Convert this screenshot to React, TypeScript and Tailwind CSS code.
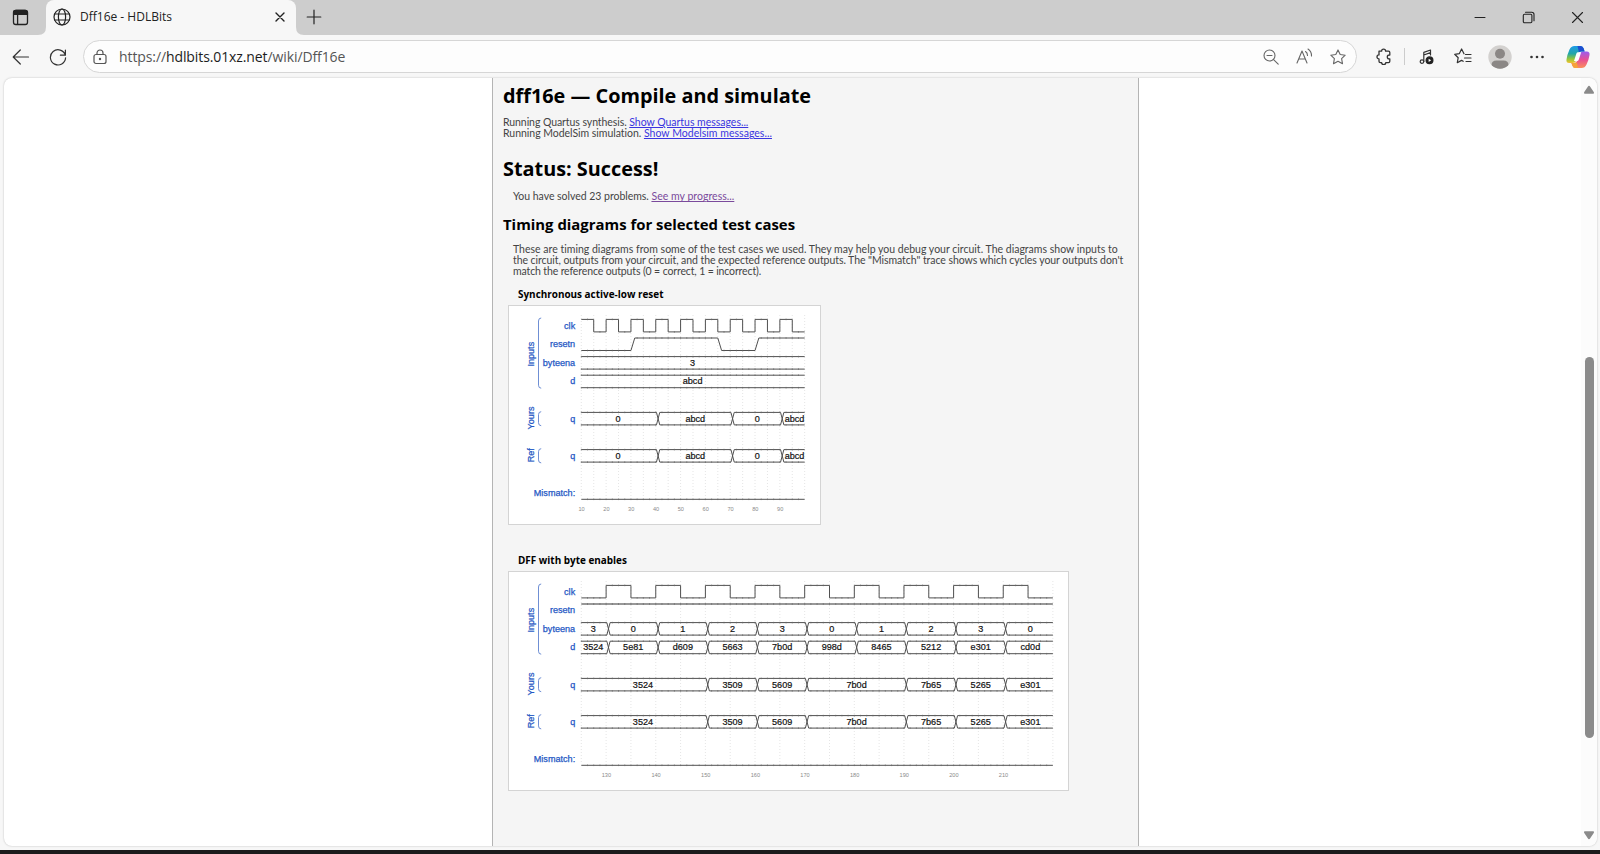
import React from "react";

type Segment = [number, number, string];
type Wave =
  | { kind: "level"; name: string; lane: number; points: [number, number][]; sharp?: boolean; heavy?: boolean }
  | { kind: "bus"; name: string; lane: number; segments: Segment[] };

const STEP = 12.41;
const LANE = 18.6;
const HIGH = 12.5;
const LEFT = 73.3;
const TOP = 14.4;

function levelPath(points: [number, number][], end: number, sharp?: boolean) {
  let d = "";
  points.forEach(([t, v], i) => {
    const x = LEFT + t * STEP;
    const y = v ? 0 : HIGH;
    if (i === 0) d += `M${x} ${y}`;
    else {
      const prev = points[i - 1][1] ? 0 : HIGH;
      d += `L${x} ${prev}L${sharp ? x : x + 3.8} ${y}`;
    }
  });
  const last = points[points.length - 1][1] ? 0 : HIGH;
  return d + `L${LEFT + end * STEP} ${last}`;
}

function busPath(segments: Segment[], end: number) {
  return segments
    .map(([s, e]) => {
      const x1 = LEFT + s * STEP;
      const x2 = LEFT + e * STEP;
      const a = s === 0 ? `M${x1} 0` : `M${x1 + 0.7} ${HIGH}L${x1 + 4} 0`;
      const b = s === 0 ? `M${x1} ${HIGH}` : `M${x1 + 0.7} 0L${x1 + 4} ${HIGH}`;
      const close = e === end ? 0 : 0.7;
      return `${a}L${x2 + close} 0${b}L${x2 + close} ${HIGH}`;
    })
    .join("");
}

function Diagram({
  width,
  end,
  grid,
  waves,
  labels,
}: {
  width: number;
  end: number;
  grid: number;
  waves: Wave[];
  labels: [number, string][];
}) {
  const gridLines = Array.from({ length: Math.floor(end / grid) + 1 }, (_, i) => LEFT + i * grid * STEP);
  const ticks = Array.from({ length: end * 2 }, (_, i) => LEFT + (i * STEP) / 2);
  const tickRow = (y: number) => ticks.map((x) => `M${x} ${y - 0.8}v1.6`).join("");
  const groups: [string, number, number, number][] = [
    ["Inputs", 13, 83.2, 49.2],
    ["Yours", 106.7, 120.7, 113],
    ["Ref", 143.7, 157.9, 150.2],
  ];
  return (
    <svg width={width} height="220" viewBox={`0 0 ${width} 220`} fontFamily="'Liberation Sans', Arial, sans-serif" fontSize="9.1" className="block">
      {gridLines.map((x) => (
        <path key={x} d={`M${x} 10V193`} stroke="#dedede" strokeWidth="0.8" strokeDasharray="1 2" />
      ))}
      {groups.map(([name, y1, y2, c]) => (
        <g key={name}>
          <path d={`M33.2 ${y1}q-2.7 0 -2.7 3V${y2 - 3}q0 3 2.7 3`} fill="none" stroke="#6f8fd4" />
          <text transform={`translate(26.4 ${c}) rotate(-90)`} textAnchor="middle" fill="#2457c4" stroke="#2457c4" strokeWidth="0.25">
            {name}
          </text>
        </g>
      ))}
      {waves.map((w) => (
        <g key={w.lane} transform={`translate(0 ${TOP + w.lane * LANE})`}>
          <text x="67.2" y="9.3" textAnchor="end" fill="#2457c4" stroke="#2457c4" strokeWidth="0.25">
            {w.name}
          </text>
          {w.kind === "level" ? (
            <>
              <path d={levelPath(w.points, end, w.sharp)} fill="none" stroke={w.heavy ? "#333" : "#505050"} strokeWidth={w.heavy ? 1.2 : 1} />
              {w.points.map(([t, v], i) => {
                const stop = w.points[i + 1]?.[0] ?? end;
                const y = v ? 0 : HIGH;
                return (
                  <path
                    key={t}
                    d={ticks
                      .filter((x) => x > LEFT + t * STEP + 1 && x < LEFT + stop * STEP)
                      .map((x) => `M${x} ${y - 0.8}v1.6`)
                      .join("")}
                    stroke="#666"
                    strokeWidth="0.7"
                  />
                );
              })}
            </>
          ) : (
            <>
              <path d={busPath(w.segments, end)} fill="none" stroke="#505050" />
              <path d={tickRow(0) + tickRow(HIGH)} stroke="#666" strokeWidth="0.7" />
              {w.segments.map(([s, e, v]) => (
                <text
                  key={s}
                  x={LEFT + ((s + e) / 2) * STEP + (s === 0 ? -0.4 : 2.3)}
                  y="9.3"
                  textAnchor="middle"
                  fill="#111"
                  stroke="#111"
                  strokeWidth="0.2"
                >
                  {v}
                </text>
              ))}
            </>
          )}
        </g>
      ))}
      {labels.map(([t, v]) => (
        <text key={v} x={LEFT + t * STEP + 0.3} y="206.4" textAnchor="middle" fontSize="5.6" fill="#8a8a8a">
          {v}
        </text>
      ))}
    </svg>
  );
}

const clock = (end: number, start: number, half: number, first: number): [number, number][] => {
  const out: [number, number][] = [[0, start]];
  let v = start;
  for (let t = first; t < end; t += half) {
    v = v ? 0 : 1;
    out.push([t, v]);
  }
  return out;
};

const resetQ: Segment[] = [[0, 6, "0"], [6, 12, "abcd"], [12, 16, "0"], [16, 18, "abcd"]];
const resetWaves: Wave[] = [
  { kind: "level", name: "clk", lane: 0, sharp: true, points: clock(18, 1, 1, 1) },
  { kind: "level", name: "resetn", lane: 1, points: [[0, 0], [4, 1], [11, 0], [14, 1]] },
  { kind: "bus", name: "byteena", lane: 2, segments: [[0, 18, "3"]] },
  { kind: "bus", name: "d", lane: 3, segments: [[0, 18, "abcd"]] },
  { kind: "bus", name: "q", lane: 5, segments: resetQ },
  { kind: "bus", name: "q", lane: 7, segments: resetQ },
  { kind: "level", name: "Mismatch:", lane: 9, points: [[0, 0]] },
];

const spread = (values: string[]): Segment[] =>
  values.map((v, i) => (i === 0 ? [0, 2, v] : [i * 4 - 2, Math.min(i * 4 + 2, 38), v]));
const byteQ: Segment[] = [
  [0, 10, "3524"],
  [10, 14, "3509"],
  [14, 18, "5609"],
  [18, 26, "7b0d"],
  [26, 30, "7b65"],
  [30, 34, "5265"],
  [34, 38, "e301"],
];
const byteWaves: Wave[] = [
  { kind: "level", name: "clk", lane: 0, sharp: true, points: clock(38, 0, 2, 2) },
  { kind: "level", name: "resetn", lane: 1, heavy: true, points: [[0, 1]] },
  { kind: "bus", name: "byteena", lane: 2, segments: spread(["3", "0", "1", "2", "3", "0", "1", "2", "3", "0"]) },
  { kind: "bus", name: "d", lane: 3, segments: spread(["3524", "5e81", "d609", "5663", "7b0d", "998d", "8465", "5212", "e301", "cd0d"]) },
  { kind: "bus", name: "q", lane: 5, segments: byteQ },
  { kind: "bus", name: "q", lane: 7, segments: byteQ },
  { kind: "level", name: "Mismatch:", lane: 9, points: [[0, 0]] },
];

function Icon({ size = 18, w = 1.2, className = "", children }: { size?: number; w?: number; className?: string; children: React.ReactNode }) {
  return (
    <svg width={size} height={size} viewBox={`0 0 ${size} ${size}`} fill="none" stroke="currentColor" strokeWidth={w} strokeLinecap="round" strokeLinejoin="round" className={`block shrink-0 ${className}`}>
      {children}
    </svg>
  );
}

const STAR = "M8 .9l2.2 4.6 5 .7-3.6 3.5.9 5L8 12.3l-4.5 2.4.9-5L.8 6.2l5-.7z";

function TabStrip() {
  return (
    <div className="flex h-[35px] shrink-0 items-center bg-[#cdcdcd] text-[#222]">
      <div className="flex h-full w-[46px] items-center pl-[12px]">
        <Icon size={17} w={1.3}>
          <rect x="1.5" y="1.5" width="14" height="14" rx="2.2" />
          <path d="M1.7 2.5Q2 1.3 4 1.3h9q2.2 0 2.4 2V5.4H1.7z" fill="currentColor" />
          <path d="M5.6 5v10.3" />
        </Icon>
      </div>
      <div className="relative flex h-full w-[250px] items-center rounded-t-lg bg-[#f7f7f7] pl-[7px]">
        <svg width="8" height="8" viewBox="0 0 8 8" className="absolute bottom-0 -left-2" fill="#f7f7f7">
          <path d="M8 0v8H0q8 0 8-8z" />
        </svg>
        <svg width="8" height="8" viewBox="0 0 8 8" className="absolute -right-2 bottom-0" fill="#f7f7f7">
          <path d="M0 0v8h8Q0 8 0 0z" />
        </svg>
        <Icon size={18} w={1.2} className="-mt-px">
          <circle cx="9" cy="9" r="8" />
          <ellipse cx="9" cy="9" rx="3.6" ry="8" />
          <path d="M1.7 6h14.6M1.7 12h14.6" />
        </Icon>
        <span className="-mt-px ml-[9px] w-[180px] whitespace-nowrap font-['Open_Sans',sans-serif] text-[12px] leading-[16px]">Dff16e - HDLBits</span>
        <Icon size={12} w={1.4} className="-mt-px ml-[14px]">
          <path d="M2 2l8 8M10 2l-8 8" />
        </Icon>
      </div>
      <Icon size={16} w={1.2} className="-mt-[2px] ml-[10px]">
        <path d="M8 1.2v13.6M1.2 8h13.6" />
      </Icon>
      <div className="ml-auto flex items-center gap-[36px] pr-[16px]">
        <Icon size={12} w={1}>
          <path d="M1 5.5h10" />
        </Icon>
        <Icon size={13} w={1.1}>
          <rect x="1.3" y="3.2" width="8.6" height="8.6" rx="1.2" />
          <path d="M3.5 1.2h6.2q2.3 0 2.3 2.3v6.2" />
        </Icon>
        <Icon size={13} w={1.1}>
          <path d="M1.500 1.500l10 10M11.500 1.500l-10 10" />
        </Icon>
      </div>
    </div>
  );
}

function Copilot() {
  return (
    <svg width="24" height="24" viewBox="0 0 24 24" className="ml-[21px] block shrink-0">
      <defs>
        <linearGradient id="cool" x1="0" y1="0" x2="0" y2="1">
          <stop offset="0" stopColor="#1f9be8" />
          <stop offset=".45" stopColor="#22a6a8" />
          <stop offset=".75" stopColor="#8fc63d" />
          <stop offset="1" stopColor="#f3c12f" />
        </linearGradient>
        <linearGradient id="warm" x1="0" y1="0" x2="0" y2="1">
          <stop offset="0" stopColor="#9a5cf0" />
          <stop offset=".5" stopColor="#e84f93" />
          <stop offset="1" stopColor="#fb8f5a" />
        </linearGradient>
      </defs>
      <path d="M8.500 1h6.300q2 0 2.900 2.500l.9 3h-3.400q-2 0-2.900 2.300l-2.200 6.600q-.8 2.600-3.300 2.600H3.200Q0 18 .5 14.500 1.200 9.500 3.500 4.500 5 1 8.500 1z" fill="url(#cool)" />
      <path d="M15.500 23H9.200q-2 0-2.900-2.500l-.9-2.500h2.900q2 0 2.900-2.300l2.200-6.600q.8-2.600 3.300-2.600h4.100q3.200 0 2.700 3.500-.7 5-3 9.500Q19 23 15.500 23z" fill="url(#warm)" />
      <path d="M11.500 1h3.300q2 0 2.900 2.500l.9 3h-3.400q-1.300 0-2.200 1z" fill="#1d4fd0" />
      <path d="M5.400 18h2.900q1.500 0 2.400-1L12 23H9.200q-2 0-2.900-2.500z" fill="#f6a23a" />
      <path d="M10.500 8.300q.4-1 1.500-1h3.200l-2.500 7.500q-.4 1.200-1.600 1.200H8z" fill="#fff" />
    </svg>
  );
}

function Toolbar() {
  return (
    <div className="flex h-[43px] shrink-0 items-center bg-[#f7f7f7] pr-[8px] pl-[12px] text-[#333]">
      <Icon size={18} w={1.2}>
        <path d="M1.200 9h15.300M8.300 2L1.200 9l7.100 7" />
      </Icon>
      <Icon size={18} w={1.2} className="ml-[19px]">
        <path d="M16.300 7.200A7.600 7.600 0 1 0 16.600 9.800M16.400 2v5.200h-5" />
      </Icon>
      <div className="ml-[16px] flex h-[33px] w-[1274px] items-center rounded-full border border-[#d6d6d6] bg-[#fdfdfd] pr-[10px] pl-[8px] text-[#555]">
        <Icon size={16} w={1.2}>
          <rect x="2" y="5.500" width="12" height="9" rx="2" />
          <path d="M5 5.500V4a3 3 0 0 1 6 0v1.500" />
          <circle cx="8" cy="10" r=".6" fill="currentColor" />
        </Icon>
        <span className="ml-[11px] whitespace-nowrap font-['Open_Sans',sans-serif] text-[14px] leading-[20px] tracking-[-0.1px] text-[#555]">
          https://<span className="text-[#1c1c1c]">hdlbits.01xz.net</span>/wiki/Dff16e
        </span>
        <div className="ml-auto flex items-center gap-[17px] text-[#666]">
          <Icon size={16} w={1.1}>
            <circle cx="6.500" cy="6.500" r="5.500" />
            <path d="M10.600 10.600l4.600 4.600M4 6.500h5" />
          </Icon>
          <Icon size={17} w={1.1}>
            <path d="M1 15L6 3l5 12M2.700 11h6.600M9.500 3.500q2 1.300 2 4M12 1q3.700 2.500 3.500 7" />
          </Icon>
          <Icon size={16} w={1.1}>
            <path d={STAR} />
          </Icon>
        </div>
      </div>
      <Icon size={17} w={1.3} className="ml-[18px]">
        <path d="M4 3.200h2.600a2 2 0 0 1 4 0H13.500q1.300 0 1.300 1.300V7h-.6a1.900 1.900 0 0 0 0 3.800h.6v2.500q0 1.300-1.300 1.300H10.800a2.100 2.100 0 0 1-4.200 0H5.300Q4 14.600 4 13.300V10.900a2 2 0 0 1 0-4z" />
      </Icon>
      <div className="ml-[12px] h-[17px] w-px bg-[#ccc]" />
      <Icon size={16} w={1.2} className="ml-[14px]">
        <path d="M4.800 12.500V3.400L11.500 1v5M4.800 6l6.700-2.400" />
        <circle cx="3" cy="12.600" r="1.800" />
        <circle cx="10.500" cy="11.300" r="3.400" fill="#222" stroke="#222" />
        <path d="M9.600 9.700v3.200l2.600-1.600z" fill="#fff" stroke="none" />
      </Icon>
      <Icon size={18} w={1.2} className="ml-[19px]">
        <path d="M10 5.800L7.600 1 5.400 5.600l-4.700.7 3.500 3.400-.9 5 4.200-2.300 1.700.9M11.500 6.500h5.500M10.500 10H17M12 13.500h5" />
      </Icon>
      <svg width="24" height="24" viewBox="0 0 24 24" className="mt-px ml-[16px] block shrink-0">
        <clipPath id="avatar">
          <circle cx="12" cy="12" r="11.700" />
        </clipPath>
        <g clipPath="url(#avatar)">
          <rect width="24" height="24" fill="#d3d1cf" />
          <circle cx="12" cy="8.800" r="5" fill="#8b8785" />
          <path d="M3.500 24V20q0-4.500 5-4.500h7q5 0 5 4.500v4z" fill="#8b8785" />
        </g>
      </svg>
      <svg width="16" height="6" viewBox="0 0 16 6" fill="#333" className="ml-[17px] block shrink-0">
        <circle cx="2.500" cy="3" r="1.300" />
        <circle cx="8" cy="3" r="1.300" />
        <circle cx="13.500" cy="3" r="1.300" />
      </svg>
      <Copilot />
    </div>
  );
}

function ScrollBar() {
  return (
    <div className="flex h-full w-[16px] shrink-0 flex-col items-center rounded-r-lg bg-[#fcfcfc] pt-[7px] pb-[6px]">
      <svg width="12" height="10" viewBox="0 0 12 10" fill="#8a8a8a">
        <path d="M6 .8q.7 0 1.200.9l3.700 5.600q.6 1.300-.7 1.400H1.800Q.5 8.600 1.100 7.300l3.700-5.600Q5.300.8 6 .8z" />
      </svg>
      <div className="mt-[262px] h-[381px] w-[9px] rounded-full bg-[#8b8b8b]" />
      <svg width="12" height="10" viewBox="0 0 12 10" fill="#8a8a8a" className="mt-auto">
        <path d="M6 9.200q.7 0 1.200-.9l3.700-5.600q.6-1.300-.7-1.400H1.800Q.5 1.400 1.100 2.700l3.700 5.600q.5.900 1.200.9z" />
      </svg>
    </div>
  );
}

const heading = "whitespace-nowrap font-['Open_Sans',sans-serif] font-bold text-black";
const body = "whitespace-nowrap font-['Lato',sans-serif] text-[10.5px] leading-[11.2px] text-[#444]";

export default function App() {
  return (
    <div className="flex h-[854px] w-[1600px] flex-col overflow-hidden bg-[#f7f7f7]">
      <TabStrip />
      <Toolbar />
      <div className="mr-[3px] ml-[4px] flex h-[768px] shrink-0 overflow-hidden rounded-lg bg-white shadow-[0_0_2px_rgba(0,0,0,0.25)]">
        <div className="flex flex-1 justify-start">
          <main className="ml-[488px] h-full w-[647px] border-x border-[#b4b4b4] bg-[#f5f5f5] pl-[10px]">
            <h1 className={`${heading} mt-[4px] text-[19.85px] leading-[28px]`}>dff16e — Compile and simulate</h1>
            <div className={`${body} mt-[7px]`}>
              <p>
                <span className="tracking-[-0.07px]">Running Quartus synthesis. </span>
                <a className="tracking-[-0.02px] text-[#3a35e0] underline">Show Quartus messages...</a>
              </p>
              <p>
                <span className="tracking-[-0.03px]">Running ModelSim simulation. </span>
                <a className="tracking-[0.03px] text-[#3a35e0] underline">Show Modelsim messages...</a>
              </p>
            </div>
            <h1 className={`${heading} mt-[16px] text-[19.85px] leading-[28px]`}>Status: Success!</h1>
            <p className={`${body} mt-[8px] ml-[10px]`}>
              <span className="tracking-[-0.03px]">You have solved 23 problems. </span>
              <a className="tracking-[0.03px] text-[#7a4a9c] underline">See my progress...</a>
            </p>
            <h2 className={`${heading} mt-[10px] text-[14.9px] leading-[22px]`}>Timing diagrams for selected test cases</h2>
            <div className={`${body} mt-[9px] ml-[10px]`}>
              <p className="tracking-[0.01px]">These are timing diagrams from some of the test cases we used. They may help you debug your circuit. The diagrams show inputs to</p>
              <p className="tracking-[-0.062px]">the circuit, outputs from your circuit, and the expected reference outputs. The "Mismatch" trace shows which cycles your outputs don't</p>
              <p className="tracking-[-0.13px]">match the reference outputs (0 = correct, 1 = incorrect).</p>
            </div>
            <h3 className={`${heading} mt-[10px] ml-[15px] text-[9.93px] leading-[14px]`}>Synchronous active-low reset</h3>
            <div className="mt-[4px] ml-[5px] h-[220px] w-[313px] bg-white outline outline-[#d4d4d4] -outline-offset-1">
              <Diagram width={313} end={18} grid={1} waves={resetWaves} labels={[[0, "10"], [2, "20"], [4, "30"], [6, "40"], [8, "50"], [10, "60"], [12, "70"], [14, "80"], [16, "90"]]} />
            </div>
            <h3 className={`${heading} mt-[28px] ml-[15px] text-[9.93px] leading-[14px]`}>DFF with byte enables</h3>
            <div className="mt-[4px] ml-[5px] h-[220px] w-[561px] bg-white outline outline-[#d4d4d4] -outline-offset-1">
              <Diagram width={561} end={38} grid={2} waves={byteWaves} labels={[[2, "130"], [6, "140"], [10, "150"], [14, "160"], [18, "170"], [22, "180"], [26, "190"], [30, "200"], [34, "210"]]} />
            </div>
          </main>
        </div>
        <ScrollBar />
      </div>
      <div className="mt-auto h-[4px] shrink-0 bg-[#1c1c1c]" />
    </div>
  );
}
